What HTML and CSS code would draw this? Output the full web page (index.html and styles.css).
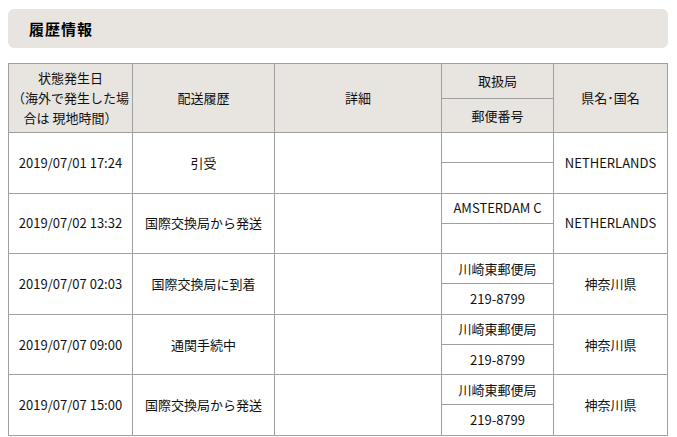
FILE: index.html
```html
<!DOCTYPE html>
<html lang="ja">
<head>
<meta charset="utf-8">
<title>履歴情報</title>
<link rel="stylesheet" href="styles.css">
</head>
<body>
<div class="page">
  <h2 class="section-title">履歴情報</h2>
  <table class="history">
    <colgroup>
      <col class="c-date">
      <col class="c-status">
      <col class="c-detail">
      <col class="c-office">
      <col class="c-pref">
    </colgroup>
    <thead>
      <tr class="h1">
        <th rowspan="2">状態発生日<br>（海外で発生した場<br>合は 現地時間）</th>
        <th rowspan="2">配送履歴</th>
        <th rowspan="2">詳細</th>
        <th>取扱局</th>
        <th rowspan="2">県名･国名</th>
      </tr>
      <tr class="h2">
        <th>郵便番号</th>
      </tr>
    </thead>
    <tbody>
      <tr class="r1">
        <td rowspan="2">2019/07/01 17:24</td>
        <td rowspan="2">引受</td>
        <td rowspan="2"></td>
        <td></td>
        <td rowspan="2">NETHERLANDS</td>
      </tr>
      <tr class="r2"><td></td></tr>

      <tr class="r1">
        <td rowspan="2">2019/07/02 13:32</td>
        <td rowspan="2">国際交換局から発送</td>
        <td rowspan="2"></td>
        <td>AMSTERDAM C</td>
        <td rowspan="2">NETHERLANDS</td>
      </tr>
      <tr class="r2"><td></td></tr>

      <tr class="r1">
        <td rowspan="2">2019/07/07 02:03</td>
        <td rowspan="2">国際交換局に到着</td>
        <td rowspan="2"></td>
        <td>川崎東郵便局</td>
        <td rowspan="2">神奈川県</td>
      </tr>
      <tr class="r2"><td>219-8799</td></tr>

      <tr class="r1">
        <td rowspan="2">2019/07/07 09:00</td>
        <td rowspan="2">通関手続中</td>
        <td rowspan="2"></td>
        <td>川崎東郵便局</td>
        <td rowspan="2">神奈川県</td>
      </tr>
      <tr class="r2"><td>219-8799</td></tr>

      <tr class="r1">
        <td rowspan="2">2019/07/07 15:00</td>
        <td rowspan="2">国際交換局から発送</td>
        <td rowspan="2"></td>
        <td>川崎東郵便局</td>
        <td rowspan="2">神奈川県</td>
      </tr>
      <tr class="r2"><td>219-8799</td></tr>
    </tbody>
  </table>
</div>
</body>
</html>
```
FILE: styles.css
```css
* { box-sizing: border-box; }
html, body {
  margin: 0;
  padding: 0;
  background: #fff;
}
body {
  font-family: "Noto Sans CJK JP", "Noto Sans", sans-serif;
  font-size: 13px;
  color: #111;
}
.page {
  padding: 9px 9px 0 8px;
}
.section-title {
  margin: 0 0 15px 0;
  height: 39px;
  padding: 0 0 0 21px;
  display: flex;
  align-items: center;
  background: #e8e4e0;
  border-radius: 6px;
  font-size: 15px;
  font-weight: bold;
  letter-spacing: 1px;
  line-height: 1;
  color: #000;
}
.history {
  width: 660px;
  border-collapse: collapse;
  table-layout: fixed;
}
.c-date { width: 124px; }
.c-status { width: 142px; }
.c-detail { width: 167px; }
.c-office { width: 112px; }
.c-pref { width: 114px; }
.history th,
.history td {
  border: 1px solid #a0a0a0;
  padding: 0;
  text-align: center;
  vertical-align: middle;
  font-weight: normal;
  white-space: nowrap;
}
.history th {
  background: #e8e4e0;
  line-height: 20px;
}
.history thead .h1 { height: 35px; }
.history thead .h2 { height: 34px; }
.history tbody .r1 { height: 30px; }
.history tbody .r2 { height: 30.6px; }
.history td { line-height: 16px; }
```
